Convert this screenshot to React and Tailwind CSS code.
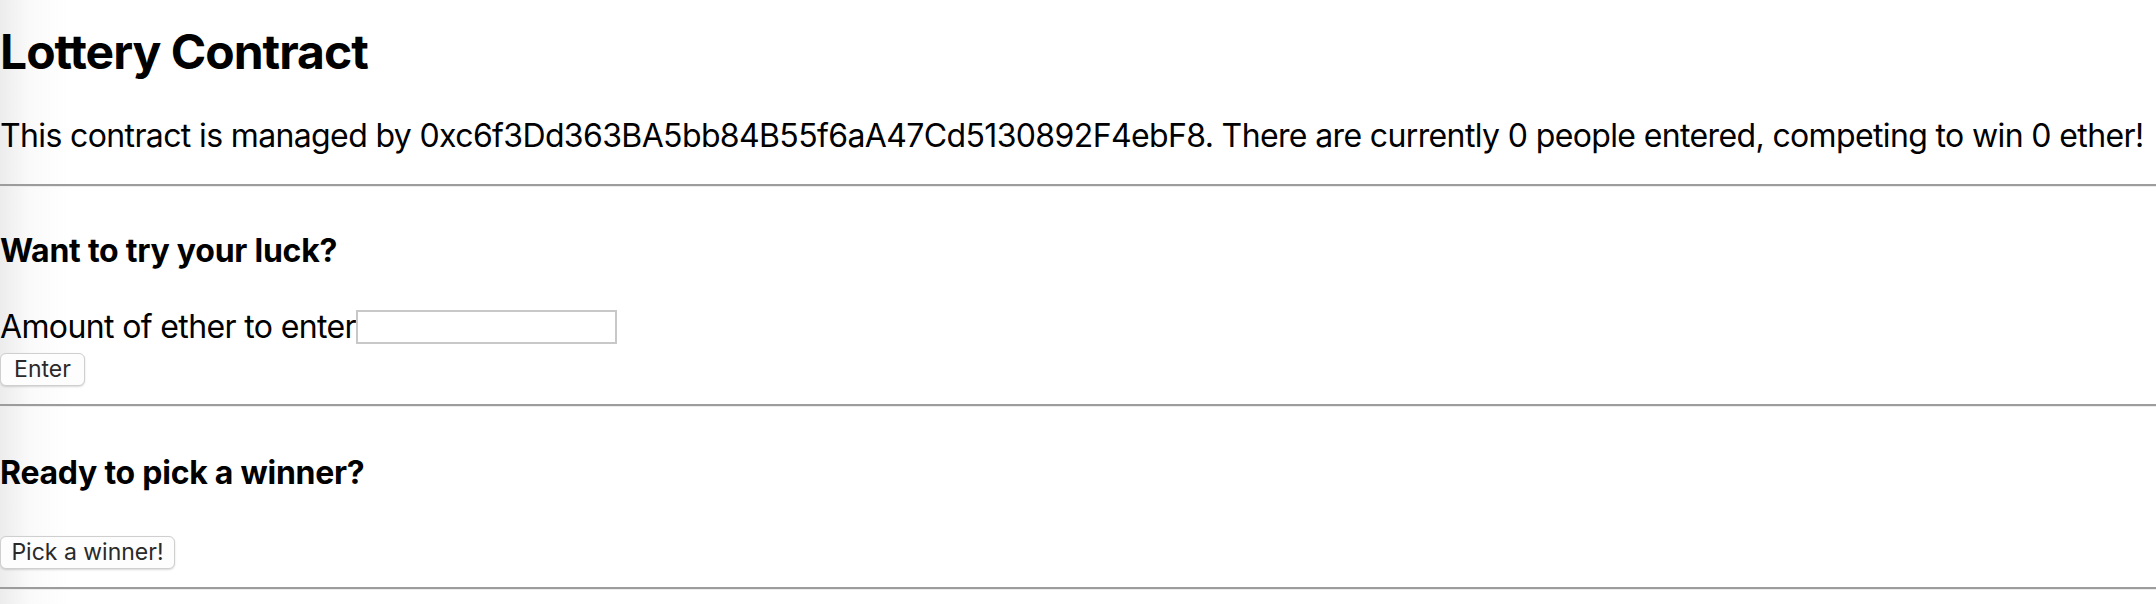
import { useState } from 'react';

export default function App() {
  const [value, setValue] = useState('');

  const manager = '0xc6f3Dd363BA5bb84B55f6aA47Cd5130892F4ebF8';

  return (
    <div className="min-h-[604px] w-full bg-[linear-gradient(to_right,#ececec_0px,#fafafa_30px,#ffffff_70px)] font-['Inter',sans-serif] text-black">
      <h2 className="pt-[23px] text-[48px] leading-[58px] font-bold tracking-[-1px]">Lottery Contract</h2>
      <p className="mt-[36px] whitespace-nowrap text-[32px] leading-[38px] tracking-[-0.63px]">
        This contract is managed by {manager}. There are currently 0 people entered, competing to win 0 ether!
      </p>
      <hr className="mt-[29px] border-t-2 border-b border-t-[#9c9c9c] border-b-[#ececec]" />

      <form onSubmit={(e) => e.preventDefault()}>
        <h4 className="mt-[45px] text-[32px] leading-[38px] font-bold tracking-[-0.25px]">Want to try your luck?</h4>
        <div className="mt-[38px] flex items-center">
          <label className="text-[32px] leading-[38px] tracking-[-0.63px]">Amount of ether to enter</label>
          <input
            value={value}
            onChange={(e) => setValue(e.target.value)}
            className="h-[34px] w-[261px] border-2 border-[#c8c8c8] bg-white px-1 text-[26px] outline-none"
          />
        </div>
        <button className="mt-[7px] h-[33px] w-[85px] rounded-[6px] border border-[#cfcfcf] bg-[#fdfdfd] text-[23px] leading-none text-[#2a2a2a] shadow-[0_1px_2px_rgba(0,0,0,0.15)]">
          Enter
        </button>
      </form>
      <hr className="mt-[18px] border-t-2 border-b border-t-[#9c9c9c] border-b-[#ececec]" />

      <h4 className="mt-[47px] text-[32px] leading-[38px] font-bold tracking-[-0.25px]">Ready to pick a winner?</h4>
      <button className="mt-[44px] h-[33px] w-[175px] rounded-[6px] border border-[#cfcfcf] bg-[#fdfdfd] text-[23px] leading-none text-[#2a2a2a] shadow-[0_1px_2px_rgba(0,0,0,0.15)]">
        Pick a winner!
      </button>
      <hr className="mt-[18px] border-t-2 border-b border-t-[#9c9c9c] border-b-[#ececec]" />
    </div>
  );
}
